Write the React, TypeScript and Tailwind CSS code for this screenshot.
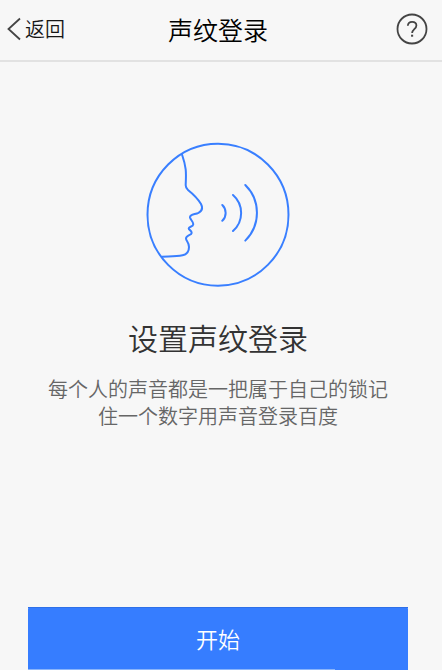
import React from "react";

function Header() {
  return (
    <header className="grid h-[62px] grid-cols-[1fr_100px_1fr] items-center border-b-2 border-[#e2e2e2] text-[#161616]">
      <button className="flex h-[58px] items-center self-start pl-[7px] text-[20px] leading-[30px]">
        <svg className="mr-[4px] block" width="14" height="24" viewBox="0 0 14 24" fill="none" stroke="#444" strokeWidth="1.8">
          <path d="M13 1.5 1.5 12l11.5 10.5" />
        </svg>
        返回
      </button>
      <h1 className="-ml-[3px] h-[60px] whitespace-nowrap text-[25px] font-[350] leading-[58px] text-black">声纹登录</h1>
      <button className="mb-[2px] mr-[14px] justify-self-end" aria-label="帮助">
        <svg className="block" width="32" height="32" viewBox="0 0 32 32" fill="none" stroke="#444" strokeWidth="1.8">
          <circle cx="16" cy="16" r="14.5" />
          <path d="M11.8 12.8c.2-2.6 1.9-4 4.3-4s4.3 1.4 4.3 3.7c0 3.4-4.3 3.9-4.3 7.6" />
          <path d="M16.1 21.7v2" strokeWidth="2.1" />
        </svg>
      </button>
    </header>
  );
}

function VoiceIcon() {
  return (
    <svg className="mt-[80px] block" width="144" height="146" viewBox="146 142 144 146" fill="none" stroke="#397fff" strokeWidth="2" strokeLinecap="round" strokeLinejoin="round">
      <ellipse cx="218" cy="214.7" rx="70.5" ry="71" />
      <path d="M182 154.5C187 169 186 174 185.7 185Q185.6 188 188 190C193 194 198 199 201 204C203 208 202 211 198.5 212.8C195 214.5 189.5 214.2 190 217.5C190.5 220 193.3 221.5 193.3 224.2C193.3 227 188.7 226.5 188.7 228.4C188.7 230 191.8 230.5 191.7 233C191.5 235.5 186 235 186 238.5C186 241 189 242 189 247C189 251 187 254.3 182.5 255.3C176 256.6 169 256.3 162 256.7" />
      <path d="M222.3 205a11 11 0 0 1 0 15.8M233 195a24 24 0 0 1 0 36M245.3 185a39 39 0 0 1 0 55.6" />
    </svg>
  );
}

export default function App() {
  return (
    <div className="flex h-[670px] w-[442px] flex-col overflow-hidden bg-[#f7f7f7] font-['Noto_Sans_CJK_SC','Noto_Sans',sans-serif] font-[350]">
      <Header />
      <main className="flex w-[436px] flex-1 flex-col items-center">
        <VoiceIcon />
        <h2 className="mt-[27px] text-[30px] font-[350] leading-[44px] text-[#333]">设置声纹登录</h2>
        <p className="mt-[16px] text-center text-[20px] leading-[27px] text-[#666]">
          每个人的声音都是一把属于自己的锁记
          <br />
          住一个数字用声音登录百度
        </p>
        <button className="mt-auto flex h-[63px] w-[380px] flex-col rounded-t-[2px] bg-[#367dff] text-[22px] text-white">
          <span className="h-[62px] w-full border-t border-[#2f70e8] text-center leading-[61px]">开始</span>
          <span className="h-px w-[307px] bg-[#8bb5fa]" />
        </button>
      </main>
    </div>
  );
}
